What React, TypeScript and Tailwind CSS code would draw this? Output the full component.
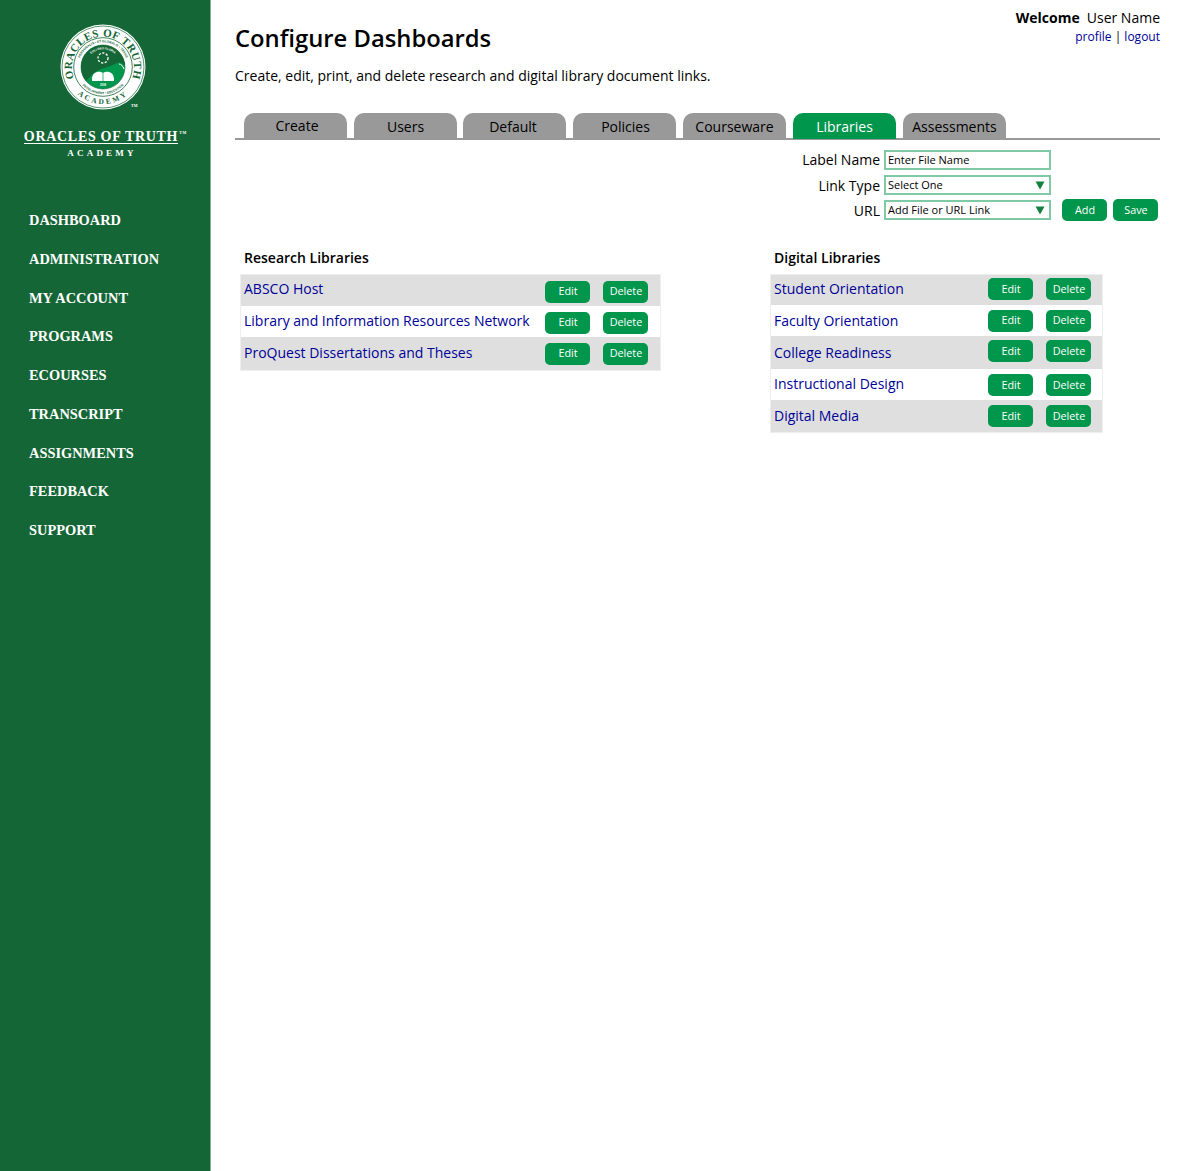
import React from 'react';

const navItems = ['DASHBOARD', 'ADMINISTRATION', 'MY ACCOUNT', 'PROGRAMS', 'ECOURSES', 'TRANSCRIPT', 'ASSIGNMENTS', 'FEEDBACK', 'SUPPORT'];

const tabs = [
  { label: 'Create', cls: 'w-[103px] mr-[7px] pl-[3px]' },
  { label: 'Users', cls: 'w-[103px] mr-[6px] pt-px' },
  { label: 'Default', cls: 'w-[103px] mr-[7px] pr-[3px] pt-px' },
  { label: 'Policies', cls: 'w-[103px] mr-[7px] pl-[2px] pt-px' },
  { label: 'Courseware', cls: 'w-[103px] mr-[7px] pt-px' },
  { label: 'Libraries', cls: 'w-[103px] mr-[7px] pt-px' },
  { label: 'Assessments', cls: 'w-[103px] pt-px' },
];

// rows in the reference aren't evenly tall, text and buttons drift a little too
const research = [
  { label: 'ABSCO Host', h: 'h-[31px]', link: 'pb-[4px]', btn: 'mt-[2px]' },
  { label: 'Library and Information Resources Network', h: 'h-[31px]', link: 'pb-[2px]', btn: 'mt-[2px]' },
  { label: 'ProQuest Dissertations and Theses', h: 'h-[33px]', link: 'pb-[2px]', btn: '' },
];
const digital = [
  { label: 'Student Orientation', h: 'h-[30px]', link: 'pb-[2px]', btn: 'mb-[2px]' },
  { label: 'Faculty Orientation', h: 'h-[31px]', link: '', btn: '' },
  { label: 'College Readiness', h: 'h-[33px]', link: '', btn: 'mb-[3px]' },
  { label: 'Instructional Design', h: 'h-[31px]', link: 'pb-[2px]', btn: 'mt-[1px]' },
  { label: 'Digital Media', h: 'h-[32px]', link: '', btn: '' },
];

const Seal = () => (
  <svg width="88" height="88" viewBox="0 0 88 88" className="block">
    <defs>
      <path id="sealTop" d="M 15.2 56 A 31 31 0 1 1 72.8 56" />
      <path id="sealBottom" d="M 15.7 67.8 A 37 37 0 0 0 72.3 67.8" />
      <path id="sealInner" d="M 20.5 52 A 24.8 24.8 0 1 1 67.5 52" />
      <path id="sealInnerLow" d="M 19 55 A 27.4 27.4 0 0 0 69 55" />
      <path id="sealCore" d="M 27 40 A 17.4 17.4 0 0 1 61 40" />
    </defs>
    <circle cx="44" cy="44" r="42.5" fill="#fff" />
    <circle cx="44" cy="44" r="41" fill="none" stroke="#156636" strokeWidth="0.7" />
    <circle cx="44" cy="44" r="29.3" fill="none" stroke="#156636" strokeWidth="0.8" />
    <circle cx="44" cy="44" r="22" fill="#00964c" stroke="#156636" strokeWidth="0.6" />
    <path d="M 22 44 A 22 22 0 0 1 66 44 C 66 42 62 38 58 40 C 52 43 48 44 42 46 C 34 49 30 55 27 58 C 24 54 22 50 22 44 Z" fill="#156636" />
    <path d="M 60 41 C 62 41 64 43 65 46" fill="none" stroke="#fff" strokeWidth="1" />
    <text fontFamily="'Liberation Serif', serif" fontWeight="700" fontSize="11" fill="#156636" letterSpacing="0.4">
      <textPath href="#sealTop" startOffset="50%" textAnchor="middle">ORACLES OF TRUTH</textPath>
    </text>
    <text fontFamily="'Liberation Serif', serif" fontWeight="700" fontSize="7.4" fill="#156636" letterSpacing="2.4">
      <textPath href="#sealBottom" startOffset="50%" textAnchor="middle">ACADEMY</textPath>
    </text>
    <text fontFamily="'Liberation Sans', sans-serif" fontWeight="700" fontSize="3.2" fill="#156636">
      <textPath href="#sealInner" startOffset="50%" textAnchor="middle">PERSONALIS • ET GLOBALIS • TRANS</textPath>
    </text>
    <text fontFamily="'Liberation Sans', sans-serif" fontWeight="700" fontSize="3.2" fill="#156636">
      <textPath href="#sealInnerLow" startOffset="50%" textAnchor="middle">DEVELOPMENT • EDUCATION</textPath>
    </text>
    <text fontFamily="'Liberation Sans', sans-serif" fontWeight="700" fontSize="2.9" fill="#fff">
      <textPath href="#sealCore" startOffset="50%" textAnchor="middle">SOLI DEO GLORIA</textPath>
    </text>
    <circle cx="44" cy="35" r="5" fill="none" stroke="#fff" strokeWidth="1.3" strokeDasharray="2.2 1.5" />
    <path d="M 33 56 C 33 49 40 47 44 50 C 48 47 55 49 55 56 L 55 58 L 33 58 Z" fill="#fff" />
    <path d="M 44 50 L 44 58" stroke="#00964c" strokeWidth="0.7" />
    <text x="44" y="62.5" textAnchor="middle" fontFamily="'Liberation Sans', sans-serif" fontWeight="700" fontSize="2.8" fill="#fff">2008</text>
  </svg>
);

const Sidebar = () => (
  <aside className="w-[211px] shrink-0 bg-[#156636] border-r border-[#7fb398] min-h-[1171px] font-['Liberation_Serif',serif]">
    <div className="flex flex-col items-center pt-[23px] pr-[8px]">
      <div className="relative ml-[3px]">
        <Seal />
        <span className="absolute right-[9px] bottom-[3px] text-[4px] leading-none text-white font-bold">TM</span>
      </div>
      <div className="relative mt-[16px] h-[17px] border-b border-white text-[14px] leading-[20px] text-white tracking-[0.7px] whitespace-nowrap font-bold">
        ORACLES OF TRUTH
        <span className="absolute left-full top-[3px] ml-[1px] text-[4px] leading-[6px]">TM</span>
      </div>
      <div className="mt-[4px] ml-[2px] text-[9px] leading-[11px] text-white font-bold tracking-[3.2px]">ACADEMY</div>
    </div>
    <nav className="mt-[51px] pl-[29px] flex flex-col gap-[18.75px]">
      {navItems.map((item) => (
        <a key={item} href="#" className="block text-[14.4px] leading-[20px] font-bold text-white whitespace-nowrap">{item}</a>
      ))}
    </nav>
  </aside>
);

const GreenButton = ({ label }: { label: string }) => (
  <button className="w-[45px] h-[22px] pl-px rounded-[5px] bg-[#00964c] text-white text-[10.8px] leading-none flex items-center justify-center">{label}</button>
);

const Tabs = () => (
  <div className="mt-[27px] h-[27px] pl-[9px] flex border-b-2 border-[#999999]">
    {tabs.map((t) => (
      <div
        key={t.label}
        className={`${t.cls} h-[26px] rounded-t-[10px] text-[14px] leading-[26px] text-center ${t.label === 'Libraries' ? 'bg-[#00964c] text-white' : 'bg-[#999999] text-black'}`}
      >
        {t.label}
      </div>
    ))}
  </div>
);

const FieldBox = ({ text, arrow = false }: { text: string; arrow?: boolean }) => (
  <div className="w-[167px] h-[20px] border-2 border-[#7fcaa5] bg-white flex items-center justify-between pl-[2px] pr-[4px] text-[11px] leading-none text-black">
    <span className="pb-[2px]">{text}</span>
    {arrow && (
      <svg width="10" height="9" viewBox="0 0 10 9"><path d="M0.5 0.5 L9.5 0.5 L5 8.5 Z" fill="#14803f" /></svg>
    )}
  </div>
);

const LinkForm = () => (
  <div className="mt-[10px] pr-[2px] flex justify-end">
    <div className="grid grid-cols-[auto_167px_103px] gap-x-[4px] gap-y-[5px] items-center">
      <span className="h-[20px] text-[14px] leading-[20px] text-right">Label Name</span>
      <FieldBox text="Enter File Name" />
      <span />
      <span className="h-[20px] text-[14px] leading-[22px] text-right">Link Type</span>
      <FieldBox text="Select One" arrow />
      <span />
      <span className="h-[20px] text-[14px] leading-[22px] text-right">URL</span>
      <FieldBox text="Add File or URL Link" arrow />
      <div className="h-[20px] flex gap-[6px] justify-end items-center">
        <GreenButton label="Add" />
        <GreenButton label="Save" />
      </div>
    </div>
  </div>
);

type Row = { label: string; h: string; link: string; btn: string };

const LibraryTable = ({ title, rows, width, padClass }: { title: string; rows: Row[]; width: string; padClass: string }) => (
  <section className={width}>
    <h2 className="pl-[4px] text-[14px] leading-[20px] font-semibold text-black">{title}</h2>
    <div className="mt-[6px] border border-[#eeeeee]">
      {rows.map((r, i) => (
        <div key={r.label} className={`${r.h} flex items-center justify-between pl-[3px] ${padClass} ${i % 2 === 0 ? 'bg-[#dfdfdf]' : 'bg-white'}`}>
          <a href="#" className={`${r.link} text-[14px] leading-[20px] text-[#000099] whitespace-nowrap`}>{r.label}</a>
          <div className={`flex gap-[13px] ${r.btn}`}>
            <GreenButton label="Edit" />
            <GreenButton label="Delete" />
          </div>
        </div>
      ))}
    </div>
  </section>
);

export default function App() {
  return (
    <div className="flex w-[1197px] min-h-[1171px] bg-white text-black font-['Open_Sans',sans-serif]">
      <Sidebar />
      <main className="flex-1 pl-[24px] pr-[37px]">
        <div className="flex justify-between">
          <div className="pt-[22px]">
            <h1 className="text-[23.8px] leading-[32px] font-semibold text-black">Configure Dashboards</h1>
            <p className="mt-[12px] text-[14px] leading-[20px]">Create, edit, print, and delete research and digital library document links.</p>
          </div>
          <div className="pt-[8px] text-right">
            <div className="text-[14px] leading-[20px]"><span className="font-bold mr-[7px]">Welcome</span>User Name</div>
            <div className="text-[12px] leading-[18px] text-[#000099]">profile <span className="text-black">|</span> logout</div>
          </div>
        </div>
        <Tabs />
        <LinkForm />
        <div className="mt-[28px] pl-[5px] flex gap-[109px]">
          <LibraryTable title="Research Libraries" rows={research} width="w-[421px]" padClass="pr-[12px]" />
          <LibraryTable title="Digital Libraries" rows={digital} width="w-[333px]" padClass="pr-[11px]" />
        </div>
      </main>
    </div>
  );
}
